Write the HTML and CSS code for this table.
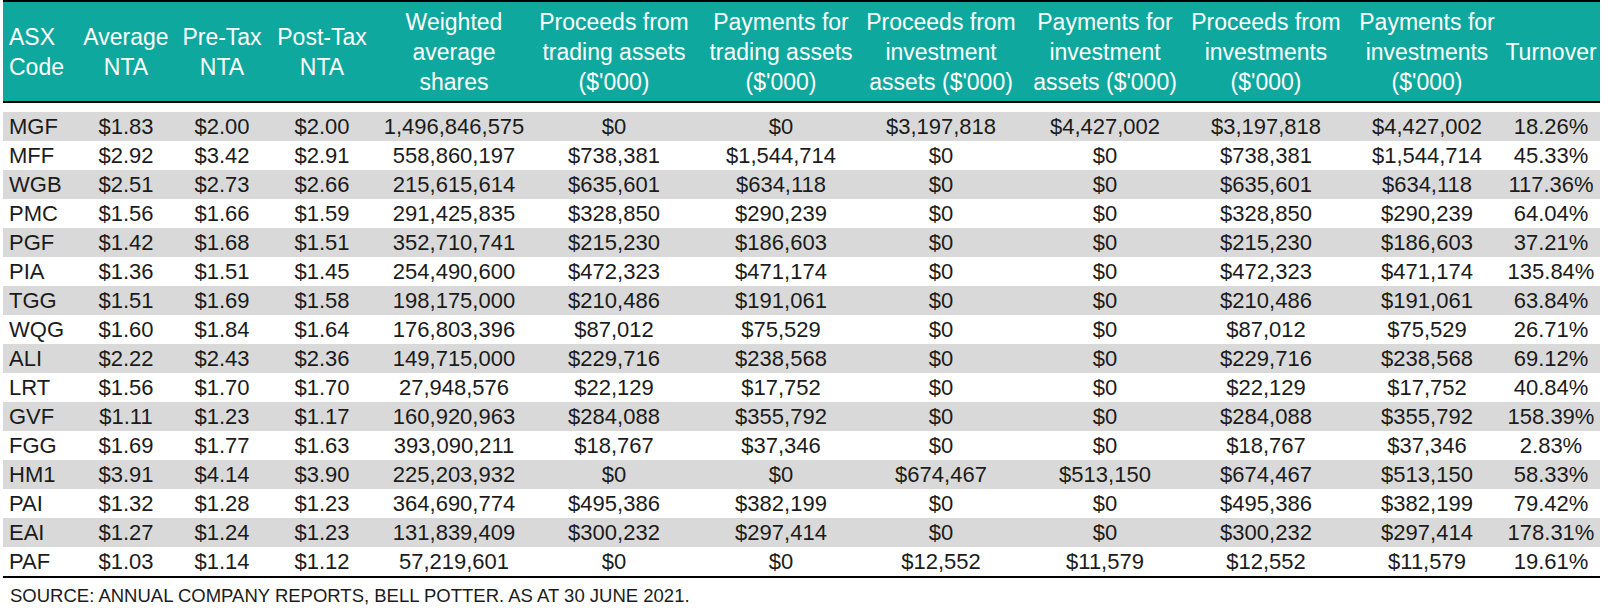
FILE: index.html
```html
<!DOCTYPE html>
<html lang="en">
<head>
<meta charset="utf-8">
<title>ASX LIC Turnover</title>
<link rel="stylesheet" href="styles.css">
</head>
<body>
<div class="sheet">
  <div class="table">
    <div class="row head">
      <div class="cell c1"><span>ASX<br>Code</span></div>
      <div class="cell c2"><span>Average<br>NTA</span></div>
      <div class="cell c3"><span>Pre-Tax<br>NTA</span></div>
      <div class="cell c4"><span>Post-Tax<br>NTA</span></div>
      <div class="cell c5"><span>Weighted<br>average<br>shares</span></div>
      <div class="cell c6"><span>Proceeds from<br>trading assets<br>($'000)</span></div>
      <div class="cell c7"><span>Payments for<br>trading assets<br>($'000)</span></div>
      <div class="cell c8"><span>Proceeds from<br>investment<br>assets ($'000)</span></div>
      <div class="cell c9"><span>Payments for<br>investment<br>assets ($'000)</span></div>
      <div class="cell c10"><span>Proceeds from<br>investments<br>($'000)</span></div>
      <div class="cell c11"><span>Payments for<br>investments<br>($'000)</span></div>
      <div class="cell c12"><span>Turnover</span></div>
    </div>
    <div class="body">
      <div class="row"><div class="cell c1">MGF</div><div class="cell c2">$1.83</div><div class="cell c3">$2.00</div><div class="cell c4">$2.00</div><div class="cell c5">1,496,846,575</div><div class="cell c6">$0</div><div class="cell c7">$0</div><div class="cell c8">$3,197,818</div><div class="cell c9">$4,427,002</div><div class="cell c10">$3,197,818</div><div class="cell c11">$4,427,002</div><div class="cell c12">18.26%</div></div>
      <div class="row"><div class="cell c1">MFF</div><div class="cell c2">$2.92</div><div class="cell c3">$3.42</div><div class="cell c4">$2.91</div><div class="cell c5">558,860,197</div><div class="cell c6">$738,381</div><div class="cell c7">$1,544,714</div><div class="cell c8">$0</div><div class="cell c9">$0</div><div class="cell c10">$738,381</div><div class="cell c11">$1,544,714</div><div class="cell c12">45.33%</div></div>
      <div class="row"><div class="cell c1">WGB</div><div class="cell c2">$2.51</div><div class="cell c3">$2.73</div><div class="cell c4">$2.66</div><div class="cell c5">215,615,614</div><div class="cell c6">$635,601</div><div class="cell c7">$634,118</div><div class="cell c8">$0</div><div class="cell c9">$0</div><div class="cell c10">$635,601</div><div class="cell c11">$634,118</div><div class="cell c12">117.36%</div></div>
      <div class="row"><div class="cell c1">PMC</div><div class="cell c2">$1.56</div><div class="cell c3">$1.66</div><div class="cell c4">$1.59</div><div class="cell c5">291,425,835</div><div class="cell c6">$328,850</div><div class="cell c7">$290,239</div><div class="cell c8">$0</div><div class="cell c9">$0</div><div class="cell c10">$328,850</div><div class="cell c11">$290,239</div><div class="cell c12">64.04%</div></div>
      <div class="row"><div class="cell c1">PGF</div><div class="cell c2">$1.42</div><div class="cell c3">$1.68</div><div class="cell c4">$1.51</div><div class="cell c5">352,710,741</div><div class="cell c6">$215,230</div><div class="cell c7">$186,603</div><div class="cell c8">$0</div><div class="cell c9">$0</div><div class="cell c10">$215,230</div><div class="cell c11">$186,603</div><div class="cell c12">37.21%</div></div>
      <div class="row"><div class="cell c1">PIA</div><div class="cell c2">$1.36</div><div class="cell c3">$1.51</div><div class="cell c4">$1.45</div><div class="cell c5">254,490,600</div><div class="cell c6">$472,323</div><div class="cell c7">$471,174</div><div class="cell c8">$0</div><div class="cell c9">$0</div><div class="cell c10">$472,323</div><div class="cell c11">$471,174</div><div class="cell c12">135.84%</div></div>
      <div class="row"><div class="cell c1">TGG</div><div class="cell c2">$1.51</div><div class="cell c3">$1.69</div><div class="cell c4">$1.58</div><div class="cell c5">198,175,000</div><div class="cell c6">$210,486</div><div class="cell c7">$191,061</div><div class="cell c8">$0</div><div class="cell c9">$0</div><div class="cell c10">$210,486</div><div class="cell c11">$191,061</div><div class="cell c12">63.84%</div></div>
      <div class="row"><div class="cell c1">WQG</div><div class="cell c2">$1.60</div><div class="cell c3">$1.84</div><div class="cell c4">$1.64</div><div class="cell c5">176,803,396</div><div class="cell c6">$87,012</div><div class="cell c7">$75,529</div><div class="cell c8">$0</div><div class="cell c9">$0</div><div class="cell c10">$87,012</div><div class="cell c11">$75,529</div><div class="cell c12">26.71%</div></div>
      <div class="row"><div class="cell c1">ALI</div><div class="cell c2">$2.22</div><div class="cell c3">$2.43</div><div class="cell c4">$2.36</div><div class="cell c5">149,715,000</div><div class="cell c6">$229,716</div><div class="cell c7">$238,568</div><div class="cell c8">$0</div><div class="cell c9">$0</div><div class="cell c10">$229,716</div><div class="cell c11">$238,568</div><div class="cell c12">69.12%</div></div>
      <div class="row"><div class="cell c1">LRT</div><div class="cell c2">$1.56</div><div class="cell c3">$1.70</div><div class="cell c4">$1.70</div><div class="cell c5">27,948,576</div><div class="cell c6">$22,129</div><div class="cell c7">$17,752</div><div class="cell c8">$0</div><div class="cell c9">$0</div><div class="cell c10">$22,129</div><div class="cell c11">$17,752</div><div class="cell c12">40.84%</div></div>
      <div class="row"><div class="cell c1">GVF</div><div class="cell c2">$1.11</div><div class="cell c3">$1.23</div><div class="cell c4">$1.17</div><div class="cell c5">160,920,963</div><div class="cell c6">$284,088</div><div class="cell c7">$355,792</div><div class="cell c8">$0</div><div class="cell c9">$0</div><div class="cell c10">$284,088</div><div class="cell c11">$355,792</div><div class="cell c12">158.39%</div></div>
      <div class="row"><div class="cell c1">FGG</div><div class="cell c2">$1.69</div><div class="cell c3">$1.77</div><div class="cell c4">$1.63</div><div class="cell c5">393,090,211</div><div class="cell c6">$18,767</div><div class="cell c7">$37,346</div><div class="cell c8">$0</div><div class="cell c9">$0</div><div class="cell c10">$18,767</div><div class="cell c11">$37,346</div><div class="cell c12">2.83%</div></div>
      <div class="row"><div class="cell c1">HM1</div><div class="cell c2">$3.91</div><div class="cell c3">$4.14</div><div class="cell c4">$3.90</div><div class="cell c5">225,203,932</div><div class="cell c6">$0</div><div class="cell c7">$0</div><div class="cell c8">$674,467</div><div class="cell c9">$513,150</div><div class="cell c10">$674,467</div><div class="cell c11">$513,150</div><div class="cell c12">58.33%</div></div>
      <div class="row"><div class="cell c1">PAI</div><div class="cell c2">$1.32</div><div class="cell c3">$1.28</div><div class="cell c4">$1.23</div><div class="cell c5">364,690,774</div><div class="cell c6">$495,386</div><div class="cell c7">$382,199</div><div class="cell c8">$0</div><div class="cell c9">$0</div><div class="cell c10">$495,386</div><div class="cell c11">$382,199</div><div class="cell c12">79.42%</div></div>
      <div class="row"><div class="cell c1">EAI</div><div class="cell c2">$1.27</div><div class="cell c3">$1.24</div><div class="cell c4">$1.23</div><div class="cell c5">131,839,409</div><div class="cell c6">$300,232</div><div class="cell c7">$297,414</div><div class="cell c8">$0</div><div class="cell c9">$0</div><div class="cell c10">$300,232</div><div class="cell c11">$297,414</div><div class="cell c12">178.31%</div></div>
      <div class="row"><div class="cell c1">PAF</div><div class="cell c2">$1.03</div><div class="cell c3">$1.14</div><div class="cell c4">$1.12</div><div class="cell c5">57,219,601</div><div class="cell c6">$0</div><div class="cell c7">$0</div><div class="cell c8">$12,552</div><div class="cell c9">$11,579</div><div class="cell c10">$12,552</div><div class="cell c11">$11,579</div><div class="cell c12">19.61%</div></div>
    </div>
  </div>
  <p class="source">SOURCE: ANNUAL COMPANY REPORTS, BELL POTTER. AS AT 30 JUNE 2021.</p>
</div>
</body>
</html>
```
FILE: styles.css
```css
* { box-sizing: border-box; }

html, body {
  margin: 0;
  padding: 0;
  background: #ffffff;
}

body {
  font-family: "Liberation Sans", Arial, sans-serif;
  color: #1b1b1b;
}

.sheet {
  padding-left: 3px;
  width: 1600px;
}

.table {
  width: 1597px;
  border-bottom: 2px solid #000000;
}

.row {
  display: grid;
  grid-template-columns: 75px 96px 96px 104px 160px 160px 174px 146px 182px 140px 166px 98px;
}

.cell {
  display: flex;
  align-items: center;
  justify-content: center;
  white-space: nowrap;
}

.cell.c1 {
  justify-content: flex-start;
  padding-left: 6px;
}

.cell.c11 { padding-left: 16px; }

/* header */
.head {
  height: 103px;
  background: #0ea89e;
  color: #ffffff;
  border-top: 2px solid #000000;
  border-bottom: 2px solid #000000;
  font-size: 23px;
  line-height: 30px;
  margin-bottom: 9px;
}

.head .cell span {
  display: block;
  text-align: center;
}

.head .c1 span { text-align: left; }

/* body */
.body .row {
  height: 29px;
  font-size: 22px;
  line-height: 29px;
}

.body .row:nth-child(odd) {
  background: #d9d9d9;
}

.source {
  margin: 7px 0 0 7px;
  font-size: 18.5px;
  line-height: 21px;
  color: #1b1b1b;
}
```
